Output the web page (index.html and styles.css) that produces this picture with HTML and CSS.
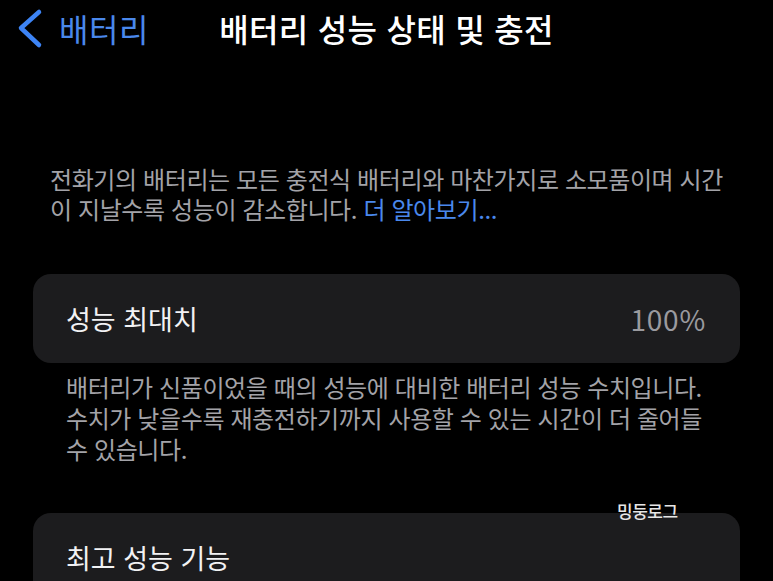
FILE: index.html
```html
<!doctype html>
<html lang="ko">
<head>
	<meta charset="UTF-8">
	<title>배터리 성능 상태 및 충전</title>
	<link rel="stylesheet" href="styles.css">
</head>
<body>
	<div class="screen">
		<div class="nav">
			<a class="back">
				<svg class="chev" width="30" height="42" viewBox="0 0 30 42">
					<polyline points="25,5 7,21 25,38" fill="none" stroke="#3d84f5" stroke-width="4.5" stroke-linecap="round" stroke-linejoin="round"/>
				</svg>
				<span class="back-label">배터리</span>
			</a>
			<div class="title">배터리 성능 상태 및 충전</div>
			<div></div>
		</div>

		<div class="content">
			<p class="intro">전화기의 배터리는 모든 충전식 배터리와 마찬가지로 소모품이며 시간<br>이 지날수록 성능이 감소합니다. <span class="link">더 알아보기...</span></p>

			<div class="card">
				<span class="label">성능 최대치</span>
				<span class="value">100%</span>
			</div>
			<p class="note">배터리가 신품이었을 때의 성능에 대비한 배터리 성능 수치입니다.<br>수치가 낮을수록 재충전하기까지 사용할 수 있는 시간이 더 줄어들<br>수 있습니다.</p>

			<div class="card">
				<span class="label">최고 성능 기능</span>
			</div>
		</div>

		<div class="mark">밍둥로그</div>
	</div>
</body>
</html>
```

FILE: styles.css
```css
*{
	margin: 0;
	padding: 0;
	box-sizing: border-box;
}
body{
	background: #000;
	font-family: "Noto Sans CJK KR", "Noto Sans", sans-serif;
}
.screen{
	position: relative;
	width: 773px;
	height: 581px;
	overflow: hidden;
	background: #000;
}
.nav{
	display: grid;
	grid-template-columns: 1fr auto 1fr;
	align-items: center;
	height: 56px;
}
.back{
	display: flex;
	align-items: center;
	padding-left: 14px;
	color: #4a88ec;
}
.chev{
	display: block;
}
.back-label{
	margin-left: 15px;
	font-size: 32px;
	letter-spacing: 0.5px;
	line-height: 42px;
}
.title{
	color: #fff;
	font-size: 32px;
	font-weight: 500;
	letter-spacing: 0.3px;
	line-height: 42px;
}
.content{
	padding: 0 33px;
}
.intro{
	margin-top: 108px;
	padding-left: 17px;
	color: #a3a3a8;
	font-size: 24px;
	line-height: 30px;
	letter-spacing: -0.4px;
}
.link{
	color: #4a88ec;
}
.card{
	display: flex;
	align-items: center;
	justify-content: space-between;
	height: 89px;
	margin-top: 50px;
	padding: 0 34px 0 33px;
	background: #1c1c1e;
	border-radius: 18px;
}
.note + .card{
	margin-top: 49px;
}
.label{
	color: #f2f2f4;
	font-size: 27px;
}
.value{
	color: #9a9a9f;
	font-size: 28px;
	letter-spacing: 0.8px;
}
.note{
	margin-top: 8px;
	padding-left: 33px;
	color: #a3a3a8;
	font-size: 24px;
	line-height: 31px;
	letter-spacing: -0.4px;
}
.mark{
	position: absolute;
	left: 617px;
	top: 498px;
	color: #e6e6e6;
	font-size: 17px;
	font-weight: 500;
	letter-spacing: -0.5px;
}
```
